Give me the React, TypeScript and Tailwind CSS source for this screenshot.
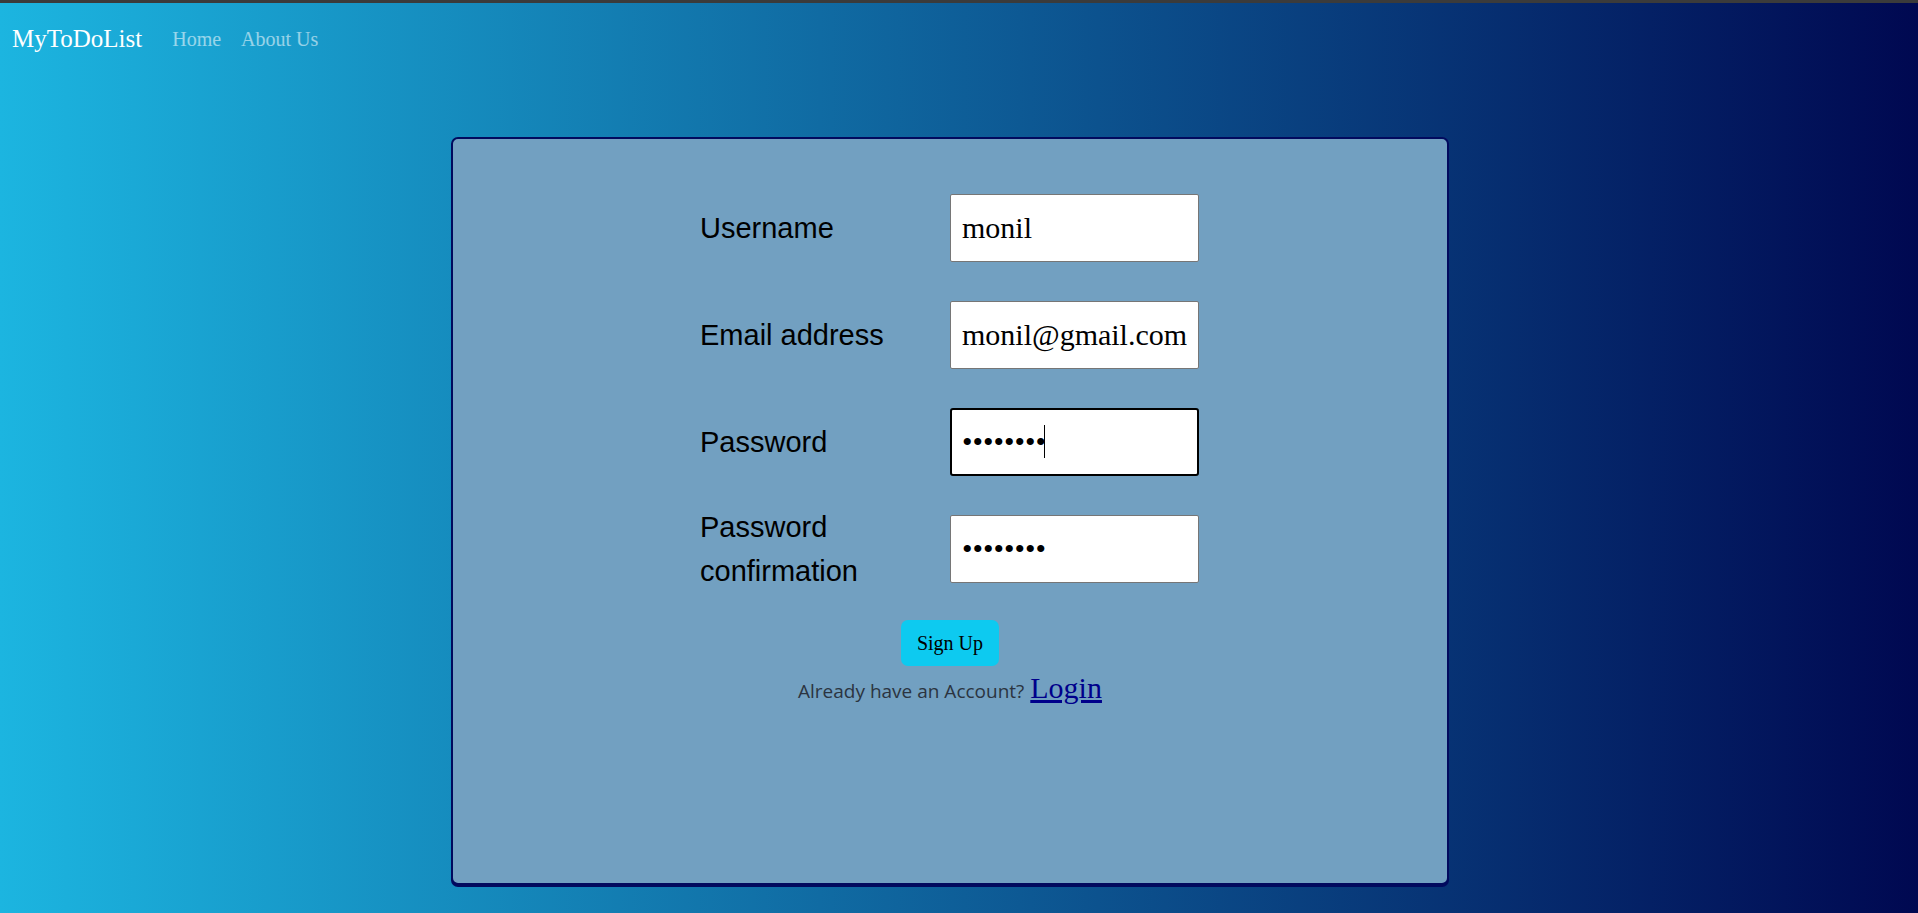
import React from "react";

const serif = "font-['Liberation_Serif','Times_New_Roman',serif]";
const sans = "font-['Liberation_Sans',Arial,sans-serif]";

const Field = ({
  label,
  type = "text",
  value,
  focused = false,
}: {
  label: string;
  type?: string;
  value: string;
  focused?: boolean;
}) => {
  return (
    <div className="flex h-[68px] items-center">
      <label className={`w-[250px] shrink-0 text-[29px] leading-[44px] text-black ${sans}`}>{label}</label>
      <div className="relative">
        <input
          type={type}
          defaultValue={value}
          readOnly
          className={`h-[68px] w-[249px] bg-white text-[30px] text-black outline-none ${serif} ${
            focused ? "rounded-[3px] border-2 border-black px-[10px]" : "rounded-[2px] border border-[#767676] px-[11px]"
          }`}
        />
        {focused && <span className="absolute left-[94px] top-[17px] h-[33px] w-px bg-black" />}
      </div>
    </div>
  );
};

const App = () => {
  return (
    <div className="min-h-screen bg-[linear-gradient(to_right,#1cb5e0,#000851)] pb-[28px]">
      <div className="h-[3px] bg-[#3b3b3b]" />
      {/* navbar */}
      <nav className={`flex items-center pl-[12px] pt-[21px] leading-[30px] ${serif}`}>
        <span className="mr-[20px] text-[25px] text-white">MyToDoList</span>
        <a className="px-[10px] text-[20px] text-white/55">Home</a>
        <a className="px-[10px] text-[20px] text-white/55">About Us</a>
      </nav>

      {/* signup card */}
      <div className="ml-[451px] mt-[83px] h-[748px] w-[998px] rounded-[7px] border-2 border-[#020a5e] bg-[#72a0c1] shadow-[0_2px_0_#020a5e]">
        <div className="flex flex-col gap-[39px] pl-[247px] pt-[55px]">
          <Field label="Username" value="monil" />
          <Field label="Email address" value="monil@gmail.com" />
          <Field label="Password" type="password" value="12345678" focused />
          <Field label="Password confirmation" type="password" value="12345678" />
        </div>

        <div className="mt-[37px] flex justify-center">
          <button className={`h-[46px] w-[98px] rounded-[7px] bg-[#0dcaf0] text-[20px] text-black ${serif}`}>
            Sign Up
          </button>
        </div>

        <div className="mt-[7px] flex items-baseline justify-center gap-[6px]">
          <span className="font-['Open_Sans',sans-serif] text-[19px] leading-none text-[#2b3440]">
            Already have an Account?
          </span>
          <a className={`text-[30px] leading-none text-[#00008b] underline ${serif}`}>Login</a>
        </div>
      </div>
    </div>
  );
};

export default App;
